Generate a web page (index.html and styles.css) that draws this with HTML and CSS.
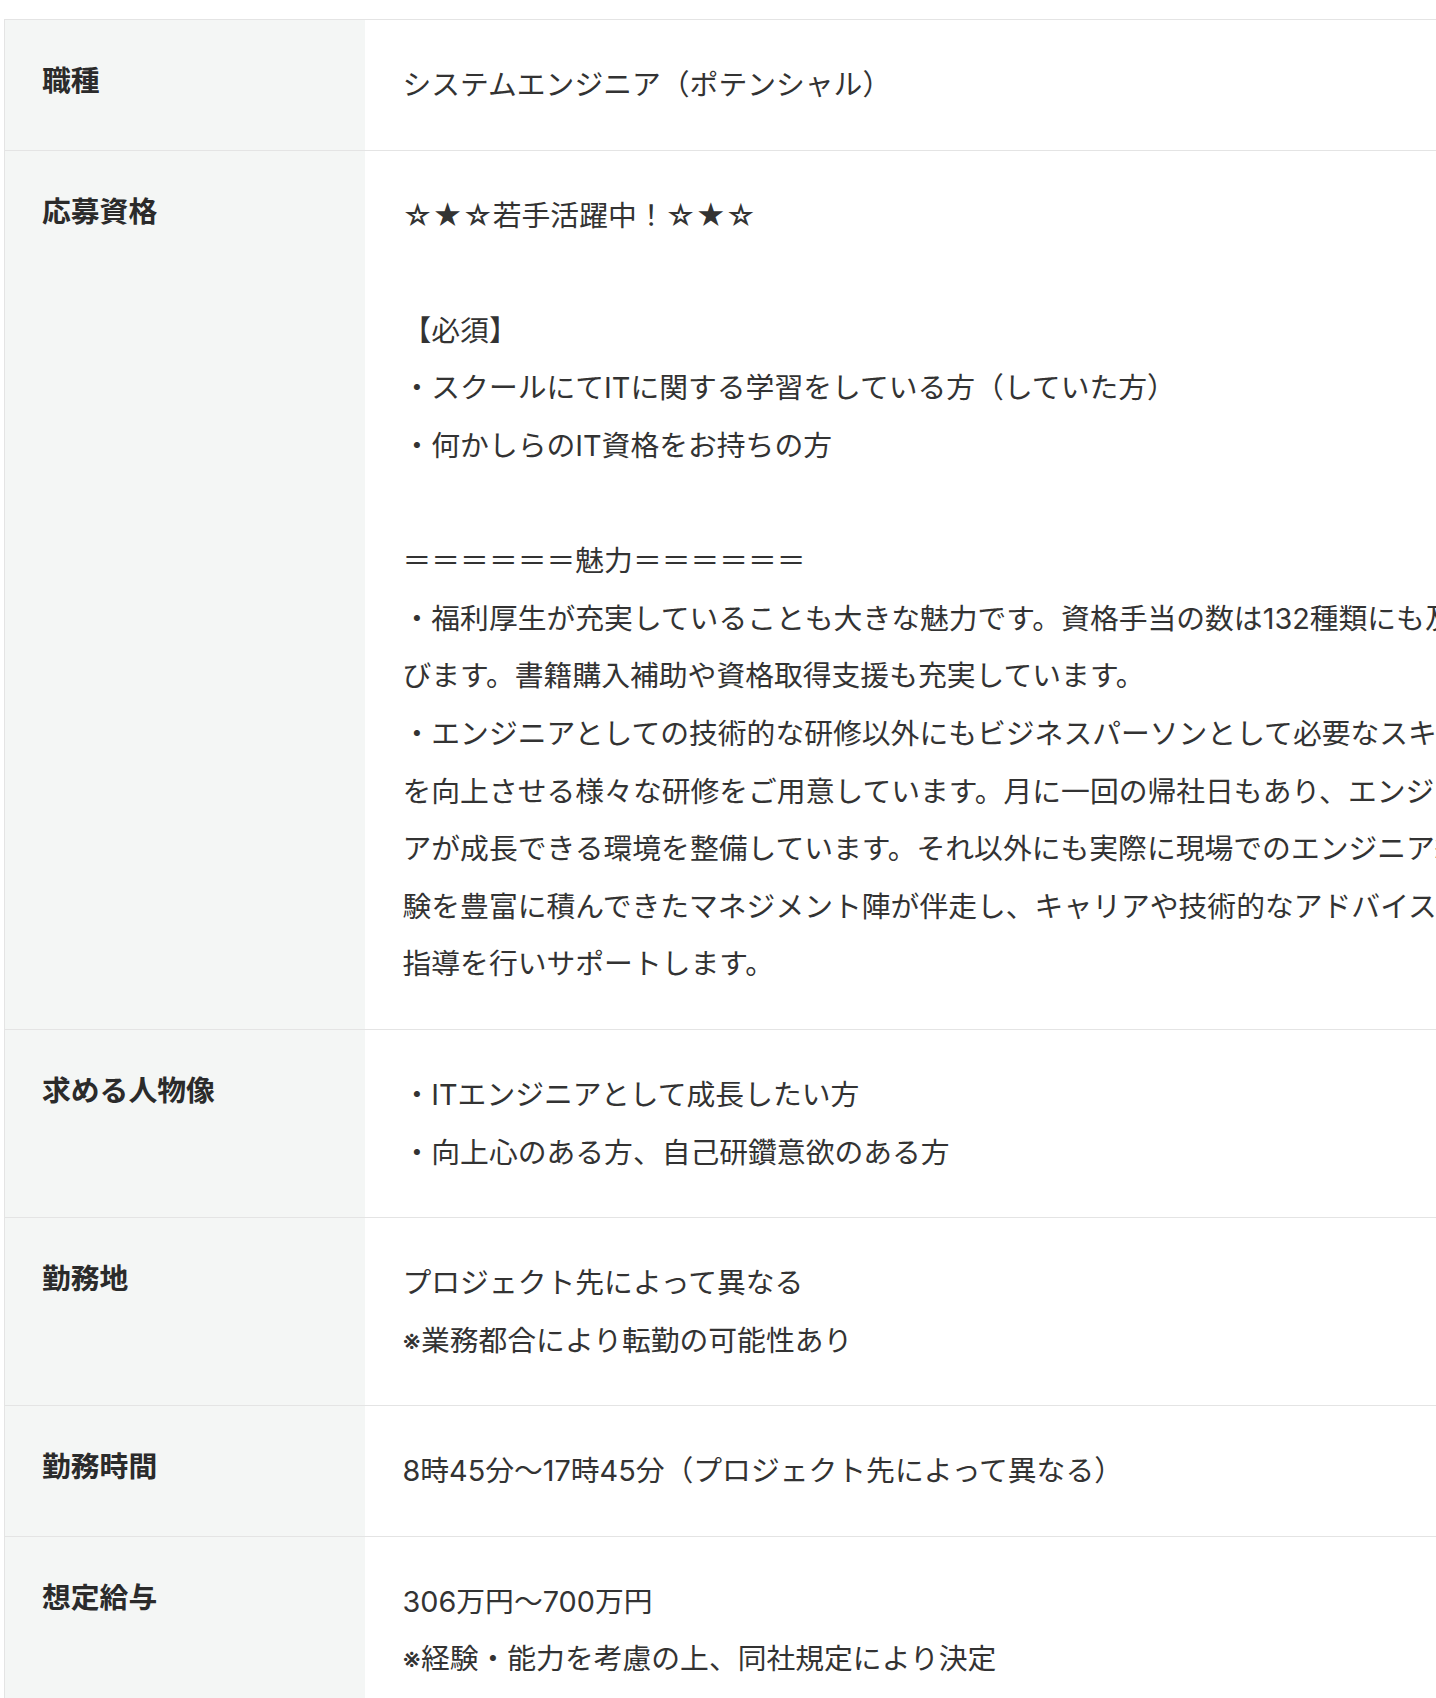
FILE: index.html
```html
<!DOCTYPE html>
<html lang="ja">
<head>
<meta charset="utf-8">
<title>募集要項</title>
<link rel="stylesheet" href="styles.css">
</head>
<body>
<table class="spec">
  <tbody>
    <tr>
      <th class="label">職種</th>
      <td class="value">システムエンジニア（ポテンシャル）</td>
    </tr>
    <tr>
      <th class="label">応募資格</th>
      <td class="value">☆★☆若手活躍中！☆★☆<br><br>【必須】<br>・スクールにてITに関する学習をしている方（していた方）<br>・何かしらのIT資格をお持ちの方<br><br>＝＝＝＝＝＝魅力＝＝＝＝＝＝<br>・福利厚生が充実していることも大きな魅力です。資格手当の数は132種類にも及びます。書籍購入補助や資格取得支援も充実しています。<br>・エンジニアとしての技術的な研修以外にもビジネスパーソンとして必要なスキルを向上させる様々な研修をご用意しています。月に一回の帰社日もあり、エンジニアが成長できる環境を整備しています。それ以外にも実際に現場でのエンジニア経験を豊富に積んできたマネジメント陣が伴走し、キャリアや技術的なアドバイスや指導を行いサポートします。</td>
    </tr>
    <tr>
      <th class="label">求める人物像</th>
      <td class="value">・ITエンジニアとして成長したい方<br>・向上心のある方、自己研鑽意欲のある方</td>
    </tr>
    <tr>
      <th class="label">勤務地</th>
      <td class="value">プロジェクト先によって異なる<br>※業務都合により転勤の可能性あり</td>
    </tr>
    <tr>
      <th class="label">勤務時間</th>
      <td class="value">8時45分〜17時45分（プロジェクト先によって異なる）</td>
    </tr>
    <tr>
      <th class="label">想定給与</th>
      <td class="value">306万円〜700万円<br>※経験・能力を考慮の上、同社規定により決定</td>
    </tr>
  </tbody>
</table>
</body>
</html>
```

FILE: styles.css
```css
html, body {
  margin: 0;
  padding: 0;
  overflow: hidden;
  background: #ffffff;
}

body {
  font-family: "Noto Sans CJK JP", "Noto Sans", sans-serif;
  color: #333333;
}

.spec {
  border-collapse: collapse;
  margin: 19px 0 0 4px;
  width: 1511px;
  table-layout: fixed;
  border-top: 1px solid #e4e4e4;
  border-left: 1px solid #e4e4e4;
}

.spec tr {
  border-bottom: 1px solid #e4e4e4;
}

.label {
  width: 360px;
  box-sizing: border-box;
  background: #f4f6f5;
  text-align: left;
  vertical-align: top;
  font-size: 28.8px;
  font-weight: 700;
  line-height: 46px;
  padding: 36px 20px 36px 37px;
  color: #2b2b2b;
}

.value {
  vertical-align: top;
  font-family: "Inter", "Noto Sans CJK JP", "Noto Sans", sans-serif;
  font-size: 28.8px;
  font-weight: 400;
  line-height: 57.6px;
  padding: 36px 38px 36px 38px;
  color: #333333;
}
```
